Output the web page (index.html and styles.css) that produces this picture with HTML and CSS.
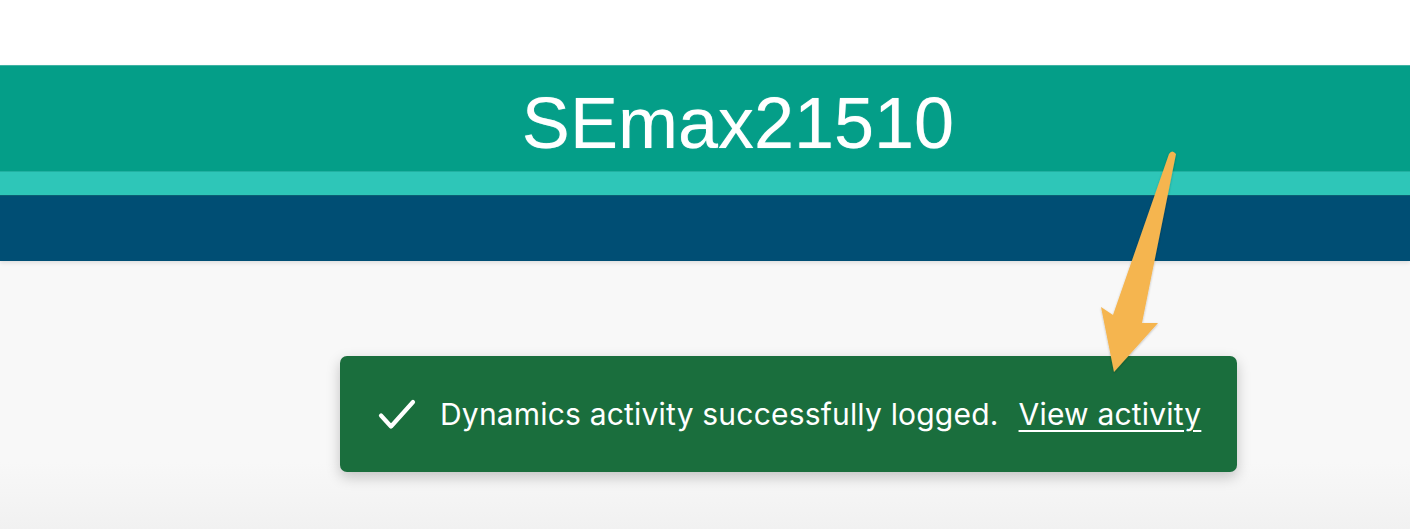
FILE: index.html
```html
<!DOCTYPE html>
<html lang="en">
<head>
<meta charset="utf-8">
<title>SEmax21510</title>
<link rel="stylesheet" href="styles.css">
</head>
<body>
  <div class="top-space"></div>
  <header class="header">
    <div class="title-bar"><h1 class="title">SEmax21510</h1></div>
    <div class="accent-bar"></div>
    <div class="nav-bar"></div>
  </header>
  <main class="main">
    <div class="toast">
      <svg class="check" width="40" height="34" viewBox="0 0 40 34" aria-hidden="true">
        <path d="M4 17.5 L14 28.5 L36 4" fill="none" stroke="#fff" stroke-width="4.2" stroke-linecap="round" stroke-linejoin="round"/>
      </svg>
      <span class="msg">Dynamics activity successfully logged.</span>
      <a class="link" href="#">View activity</a>
    </div>
  </main>
  <svg class="arrow" width="1410" height="529" viewBox="0 0 1410 529" aria-hidden="true">
    <defs>
      <filter id="sh" x="-20%" y="-20%" width="140%" height="140%">
        <feDropShadow dx="0" dy="1" stdDeviation="1.2" flood-color="#000" flood-opacity="0.25"/>
      </filter>
    </defs>
    <path filter="url(#sh)" fill="#F5B54F" d="M1169 154 Q1172 149 1176 154 L1142 323 L1158 323 L1114 372 L1101 307 L1113 315 Z"/>
  </svg>
</body>
</html>
```

FILE: styles.css
```css
* { box-sizing: border-box; }
html, body { margin: 0; padding: 0; }
body {
  width: 1410px;
  height: 529px;
  overflow: hidden;
  background: #fff;
  font-family: "Liberation Sans", Arial, sans-serif;
  position: relative;
  display: flex;
  flex-direction: column;
}
.top-space { height: 65px; flex: none; background: #fff; }
.header { flex: none; position: relative; z-index: 1; box-shadow: 0 2px 4px rgba(0,0,0,0.1); }
.title-bar {
  height: 106px;
  background: #049E88;
  border-top: 1px solid #3fb3a3;
  display: flex;
  align-items: center;
  justify-content: center;
  padding-left: 66px;
}
.title {
  margin: 0;
  color: #fff;
  font-family: "Liberation Sans", Arial, sans-serif;
  font-weight: 400;
  font-size: 72px;
  line-height: 1;
  padding-top: 8px;
  text-shadow: 0 0 1px rgba(255,255,255,0.6);
}
.accent-bar { height: 24px; background: #2EC6B8; border-top: 1px solid #22b1a2; }
.nav-bar { height: 66px; background: #004E74; border-top: 1px solid #0b5f73; }
.main {
  flex: 1;
  background: linear-gradient(#f8f8f8 0, #f8f8f8 75%, #f1f1f1 100%);
  padding: 95px 0 0 340px;
}
.toast {
  display: inline-flex;
  align-items: center;
  height: 116px;
  padding: 0 36px 0 37px;
  background: #1A6E3D;
  border-radius: 7px;
  box-shadow: 0 5px 14px rgba(0,0,0,0.22);
  color: #fff;
  font-family: Inter, "Noto Sans", sans-serif;
  font-size: 30px;
  letter-spacing: 0.19px;
}
.check { flex: none; margin-right: 23px; margin-top: 2px; }
.msg { white-space: nowrap; }
.link {
  color: #fff;
  margin-left: 20px;
  white-space: nowrap;
  text-decoration: underline;
  text-decoration-thickness: 2px;
  text-underline-offset: 5px;
}
.arrow { position: absolute; left: 0; top: 0; z-index: 5; pointer-events: none; }
```
